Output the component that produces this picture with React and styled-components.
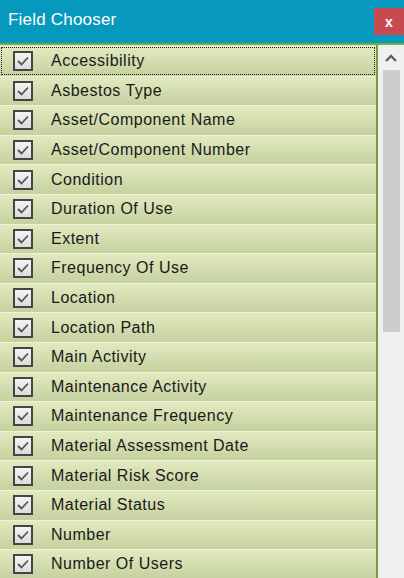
import React from "react";
import styled, { createGlobalStyle } from "styled-components";

const GlobalStyle = createGlobalStyle`
  html, body {
    margin: 0;
    padding: 0;
    overflow: hidden;
    background: #ffffff;
  }
`;

const Panel = styled.div`
  width: 404px;
  height: 578px;
  display: flex;
  flex-direction: column;
  overflow: hidden;
  font-family: "Liberation Sans", Arial, sans-serif;
`;

const TitleBar = styled.div`
  height: 43px;
  flex: none;
  background: #0799bd;
  border-bottom: 2px solid #6cae3e;
  display: flex;
  align-items: flex-start;
  justify-content: space-between;
`;

const Title = styled.div`
  color: #ffffff;
  font-size: 17px;
  padding: 10px 0 0 8px;
  letter-spacing: 0.2px;
`;

const CloseButton = styled.div`
  width: 30px;
  height: 27px;
  margin-top: 8px;
  background: #c8494f;
  color: #ffffff;
  font-weight: bold;
  font-size: 14px;
  display: flex;
  align-items: center;
  justify-content: center;
`;

const Body = styled.div`
  flex: 1;
  display: flex;
  min-height: 0;
`;

const List = styled.div`
  width: 376px;
  padding-top: 1px;
  border-right: 2px solid #7a9a3c;
  overflow: hidden;
  background: linear-gradient(#e2e9bf, #c5d19f) 0 0 / 100% 29.6px repeat-y;
`;

const Row = styled.div`
  height: 29.6px;
  box-sizing: border-box;
  display: flex;
  align-items: center;
  background: linear-gradient(#e2e9bf, #c5d19f);
  border-top: 1px solid #eef3d8;
  outline: ${(p) => (p.$focused ? "1px dotted #222" : "none")};
  outline-offset: -2px;
`;

const Box = styled.div`
  width: 16px;
  height: 16px;
  margin-left: 13px;
  border: 2px solid #454545;
  background: linear-gradient(#f4f4f4, #dcdcdc);
  display: flex;
  align-items: center;
  justify-content: center;
  flex: none;
`;

const Label = styled.span`
  margin-left: 18px;
  font-size: 16px;
  color: #1a1a1a;
  letter-spacing: 0.5px;
  white-space: nowrap;
`;

const Scrollbar = styled.div`
  width: 26px;
  background: #f0f0f0;
  display: flex;
  flex-direction: column;
  align-items: center;
`;

const Arrow = styled.div`
  height: 25px;
  display: flex;
  align-items: center;
  justify-content: center;
`;

const Thumb = styled.div`
  width: 17px;
  height: 262px;
  background: #cdcdcd;
`;

const fields = [
  "Accessibility",
  "Asbestos Type",
  "Asset/Component Name",
  "Asset/Component Number",
  "Condition",
  "Duration Of Use",
  "Extent",
  "Frequency Of Use",
  "Location",
  "Location Path",
  "Main Activity",
  "Maintenance Activity",
  "Maintenance Frequency",
  "Material Assessment Date",
  "Material Risk Score",
  "Material Status",
  "Number",
  "Number Of Users",
];

const Check = () => (
  <svg width="14" height="12" viewBox="0 0 14 12">
    <path d="M2 6 L5.5 9.5 L12 2.5" fill="none" stroke="#555" strokeWidth="1.8" />
  </svg>
);

const App = () => (
  <Panel>
    <GlobalStyle />
    <TitleBar>
      <Title>Field Chooser</Title>
      <CloseButton>x</CloseButton>
    </TitleBar>
    <Body>
      <List>
        {fields.map((f, i) => (
          <Row key={f} $focused={i === 0}>
            <Box>
              <Check />
            </Box>
            <Label>{f}</Label>
          </Row>
        ))}
      </List>
      <Scrollbar>
        <Arrow>
          <svg width="12" height="8" viewBox="0 0 12 8">
            <path d="M1 7 L6 2 L11 7" fill="none" stroke="#606060" strokeWidth="2.4" />
          </svg>
        </Arrow>
        <Thumb />
      </Scrollbar>
    </Body>
  </Panel>
);

export default App;
